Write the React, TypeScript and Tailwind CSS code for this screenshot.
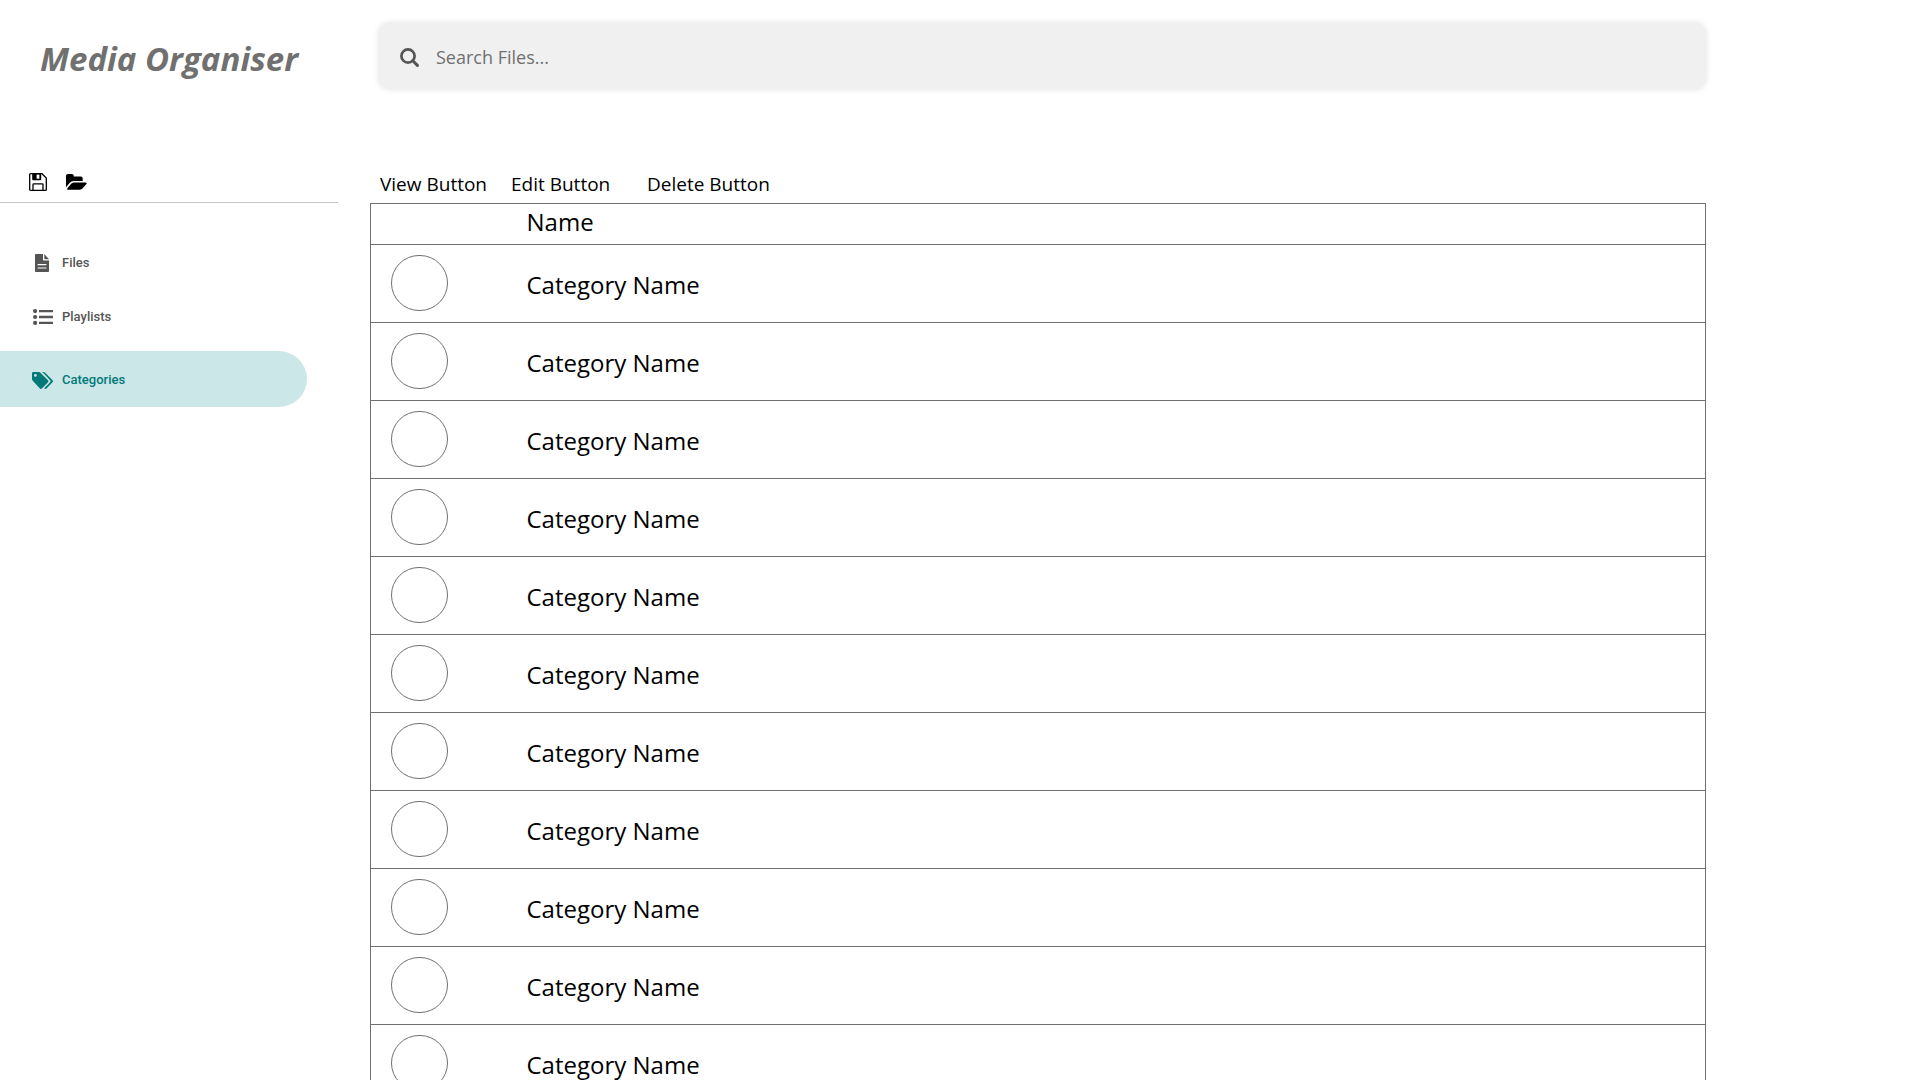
import React from "react";

function SaveIcon() {
  return (
    <svg viewBox="0 0 18 18" className="size-[18px]" fill="none" stroke="currentColor" aria-hidden="true">
      <path d="M1.6.7H13l4.3 4.3v11.4a.9.9 0 0 1-.9.9H1.6a.9.9 0 0 1-.9-.9V1.6a.9.9 0 0 1 .9-.9z" strokeWidth="1.3" />
      <path fill="currentColor" stroke="none" fillRule="evenodd" d="M3.2.5h9v6a.8.8 0 0 1-.8.8H4a.8.8 0 0 1-.8-.8zM7.6 1.6v4.2h2.8V1.6z" />
      <path d="M4 17.2v-5.6a.8.8 0 0 1 .8-.8h8.4a.8.8 0 0 1 .8.8v5.6" strokeWidth="1.3" />
    </svg>
  );
}

function FolderIcon() {
  return (
    <svg viewBox="0 0 21 16" className="h-4 w-[21px]" fill="currentColor" aria-hidden="true">
      <path d="M0 13.3V2C0 .9.9 0 2 0h3.8c1.1 0 2 .9 2 2v.6h6.9c1.1 0 2 .9 2 2v2.3H7.6c-1.5 0-3.1.9-4 2L0 13.3z" />
      <path d="M20.8 9.1c0 .4-.3.8-.6 1.1l-3.5 4.1c-.6.8-1.9 1.4-2.9 1.4H2.4c-.5 0-1.2-.2-1.2-.8 0-.4.3-.7.6-1.1l3.4-4c.6-.8 1.9-1.4 2.9-1.4h11.5c.5 0 1.2.2 1.2.7z" />
    </svg>
  );
}

function TagsIcon() {
  return (
    <svg viewBox="0 0 21 17" className="h-[17px] w-[21px]" fill="currentColor" aria-hidden="true">
      <path fillRule="evenodd" d="M0 1.4C0 .6.6 0 1.4 0h4.9c.8 0 1.8.4 2.3 1l7.4 7.3c.5.6.5 1.4 0 2l-6.100 6.200c-.6.5-1.500.5-2 0L1 9.1c-.6-.5-1-1.5-1-2.300V1.400zM3.400 2a1.400 1.400 0 1 0 0 2.800 1.400 1.400 0 0 0 0-2.800z" />
      <path d="M9 0h2.100c.8 0 1.800.4 2.400 1l7 7.300c.6.6.6 1.400 0 2l-6 6.200c-1 .8-1.800.4-2.300-.2l5.900-6c.6-.6.6-1.500 0-2L11.400 1C10.800.5 9.900 0 9 0z" />
    </svg>
  );
}

function SearchIcon() {
  return (
    <svg viewBox="0 0 19 19" className="size-[19px] text-[#555555]" fill="none" stroke="currentColor" aria-hidden="true">
      <circle cx="8" cy="8" r="6.6" strokeWidth="2.7" />
      <path d="M12.8 12.8l4.6 4.6" strokeWidth="3" strokeLinecap="round" />
    </svg>
  );
}

function FileIcon() {
  return (
    <svg viewBox="0 0 14 18" className="h-[18px] w-[14px]" fill="currentColor" aria-hidden="true">
      <path d="M9.3 0v4.200c0 .6.4 1 1 1H14L9.300 0z" />
      <path fillRule="evenodd" d="M.8 0H8v5.400c0 .6.5 1.100 1.100 1.100H14v10.700c0 .5-.3.8-.8.8H.8c-.5 0-.8-.3-.8-.8V.8C0 .3.3 0 .8 0zM2.600 10v1.200h8.800V10zm0 3.400v1.200h8.800v-1.200z" />
    </svg>
  );
}

function ListIcon() {
  return (
    <svg viewBox="0 0 20 16" className="h-4 w-5" fill="currentColor" aria-hidden="true">
      <circle cx="2.1" cy="2.1" r="2.1" />
      <circle cx="2.1" cy="8" r="2.1" />
      <circle cx="2.1" cy="13.9" r="2.1" />
      <path d="M6 .9h14v2.400H6zM6 6.800h14v2.400H6zM6 12.700h14v2.400H6z" />
    </svg>
  );
}

const actions = ["View Button", "Edit Button", "Delete Button"];
const rows = Array.from({ length: 11 }, (_, i) => i + 1);

function Sidebar() {
  return (
    <aside className="w-[370px] shrink-0">
      <h1 className="pt-9 pl-10 text-[33px] leading-[46px] font-bold text-[#707070] italic">Media Organiser</h1>
      <div className="mt-[76px] mr-8 flex h-[45px] items-center gap-[19px] border-b border-[#c8c8c8] pt-1 pl-[29px] text-black">
        <button type="button" aria-label="Save"><SaveIcon /></button>
        <button type="button" aria-label="Open folder"><FolderIcon /></button>
      </div>
      <nav className="mr-[63px] flex flex-col pt-8 font-[Roboto,sans-serif] text-[13px] font-medium text-[#555555]">
        <a href="#files" className="flex h-[54px] items-center pt-0.5 pl-8">
          <span className="w-[30px] pl-[3px]"><FileIcon /></span>Files
        </a>
        <a href="#playlists" className="flex h-[54px] items-center pt-0.5 pl-8">
          <span className="w-[30px] pl-px"><ListIcon /></span>Playlists
        </a>
        <a href="#categories" aria-current="page" className="mt-2 flex h-14 items-center rounded-r-full bg-[#cce7e8] pt-0.5 pl-8 text-[#007a78]">
          <span className="w-[30px]"><TagsIcon /></span>Categories
        </a>
      </nav>
    </aside>
  );
}

export default function App() {
  return (
    <div className="flex h-screen overflow-hidden bg-white font-['Open_Sans',sans-serif]">
      <Sidebar />
      <main className="mr-[214px] min-w-0 flex-1">
        <label className="mt-[23px] ml-[9px] flex h-[66px] items-center gap-[17px] rounded-[10px] bg-[#f0f0f0] pt-0.5 pl-[21px] shadow-[0_0_6px_rgba(0,0,0,0.12)]">
          <SearchIcon />
          <input type="search" aria-label="Search files" placeholder="Search Files..." className="h-full min-w-0 flex-1 bg-transparent text-[18px] outline-none placeholder:text-[#707070]" />
        </label>
        <div className="mt-[78px] grid h-9 grid-cols-[131px_136px_auto] justify-start pl-[10px] text-[19px] leading-[30px] text-black">
          {actions.map((name) => (
            <button key={name} type="button" className="pb-0.5 text-left whitespace-nowrap">{name}</button>
          ))}
        </div>
        <table className="w-full border-collapse text-left text-[24px] text-black">
          <thead>
            <tr className="h-[41px] border border-[#707070]">
              <th aria-label="Select" className="w-[156px] p-0" />
              <th className="p-0 pb-1 leading-9 font-normal">Name</th>
            </tr>
          </thead>
          <tbody>
            {rows.map((n) => (
              <tr key={n} className="h-[78px] border border-[#707070]">
                <td className="p-0 pb-0.5 pl-5">
                  <input type="checkbox" aria-label={`Select category ${n}`} className="block h-14 w-[57px] appearance-none rounded-full border border-[#707070] bg-white checked:bg-[#cce7e8]" />
                </td>
                <td className="p-0 pt-0.5">Category Name</td>
              </tr>
            ))}
          </tbody>
        </table>
      </main>
    </div>
  );
}
